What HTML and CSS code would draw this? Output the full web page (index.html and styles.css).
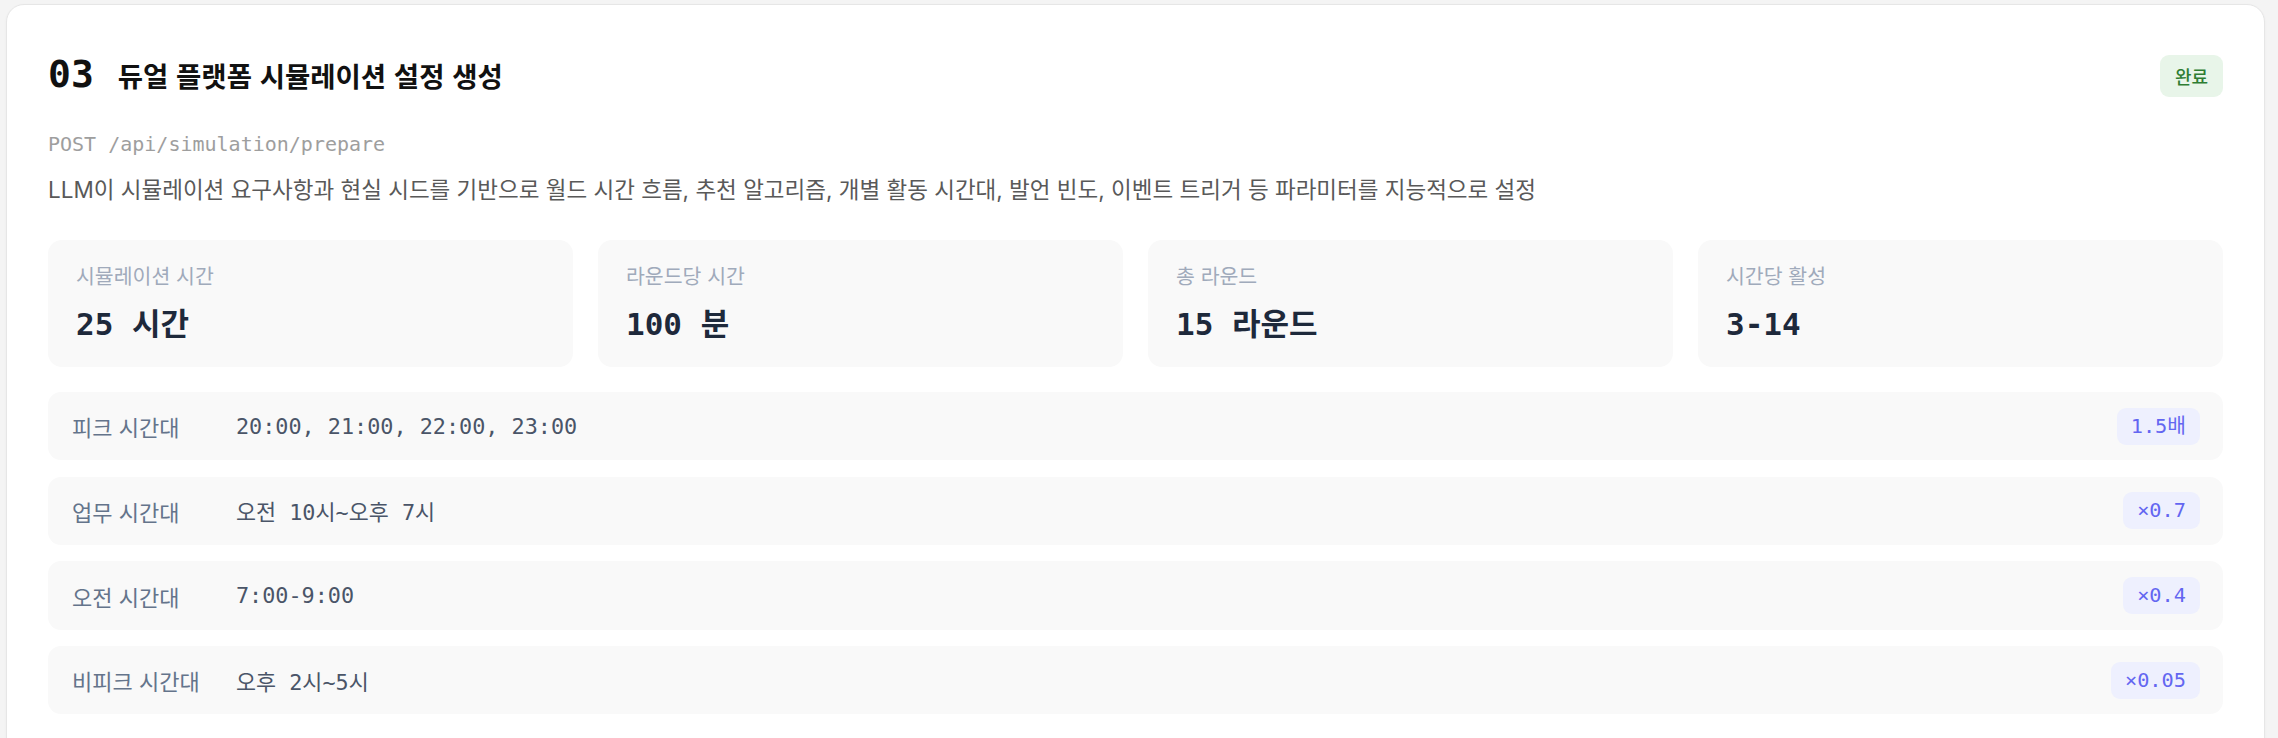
FILE: index.html
```html
<!DOCTYPE html>
<html lang="ko">
<head>
<meta charset="utf-8">
<title>03 듀얼 플랫폼 시뮬레이션 설정 생성</title>
<link rel="stylesheet" href="styles.css">
</head>
<body>
<div class="card">
  <div class="header">
    <div class="title-group">
      <span class="step">03</span>
      <h2 class="title">듀얼 플랫폼 시뮬레이션 설정 생성</h2>
    </div>
    <span class="status">완료</span>
  </div>
  <div class="endpoint">POST /api/simulation/prepare</div>
  <p class="desc">LLM이 시뮬레이션 요구사항과 현실 시드를 기반으로 월드 시간 흐름, 추천 알고리즘, 개별 활동 시간대, 발언 빈도, 이벤트 트리거 등 파라미터를 지능적으로 설정</p>

  <div class="stats">
    <div class="stat">
      <div class="stat-label">시뮬레이션 시간</div>
      <div class="stat-value">25 시간</div>
    </div>
    <div class="stat">
      <div class="stat-label">라운드당 시간</div>
      <div class="stat-value">100 분</div>
    </div>
    <div class="stat">
      <div class="stat-label">총 라운드</div>
      <div class="stat-value">15 라운드</div>
    </div>
    <div class="stat">
      <div class="stat-label">시간당 활성</div>
      <div class="stat-value">3-14</div>
    </div>
  </div>

  <div class="periods">
    <div class="period">
      <span class="period-label">피크 시간대</span>
      <span class="period-value">20:00, 21:00, 22:00, 23:00</span>
      <span class="mult">1.5배</span>
    </div>
    <div class="period">
      <span class="period-label">업무 시간대</span>
      <span class="period-value">오전 10시~오후 7시</span>
      <span class="mult">×0.7</span>
    </div>
    <div class="period">
      <span class="period-label">오전 시간대</span>
      <span class="period-value">7:00-9:00</span>
      <span class="mult">×0.4</span>
    </div>
    <div class="period">
      <span class="period-label">비피크 시간대</span>
      <span class="period-value">오후 2시~5시</span>
      <span class="mult">×0.05</span>
    </div>
  </div>
</div>
</body>
</html>
```

FILE: styles.css
```css
html, body {
  margin: 0;
  padding: 0;
  background: #f4f4f4;
}

body {
  font-family: "Inter", "Noto Sans CJK KR", sans-serif;
  overflow: hidden;
}

.card {
  margin: 4px 13px 0 6px;
  background: #ffffff;
  border: 1px solid #e6e6e6;
  border-radius: 18px;
  padding: 41px 41px 60px 41px;
  box-shadow: 0 1px 3px rgba(0, 0, 0, 0.04);
}

.header {
  display: flex;
  justify-content: space-between;
  align-items: flex-start;
  margin-bottom: 27px;
}

.title-group {
  display: flex;
  align-items: baseline;
  gap: 24px;
  line-height: 56px;
}

.step {
  font-family: "DejaVu Sans Mono", monospace;
  font-weight: 700;
  font-size: 38px;
  color: #111111;
}

.title {
  margin: 0;
  font-family: "Noto Sans CJK KR", sans-serif;
  font-size: 27.5px;
  font-weight: 700;
  color: #111111;
}

.status {
  margin-top: 9px;
  padding: 9px 15px;
  line-height: 24px;
  font-family: "Noto Sans CJK KR", sans-serif;
  font-size: 18px;
  font-weight: 500;
  color: #2e7d32;
  background: #e8f5e9;
  border-radius: 9px;
}

.endpoint {
  font-family: "DejaVu Sans Mono", monospace;
  font-size: 20px;
  line-height: 28px;
  color: #9e9e9e;
}

.desc {
  margin: 16px 0 0 0;
  font-size: 22.5px;
  line-height: 32px;
  color: #595959;
}

.stats {
  display: grid;
  grid-template-columns: repeat(4, 1fr);
  gap: 25px;
  margin-top: 34px;
}

.stat {
  background: #f9f9f9;
  border-radius: 14px;
  padding: 23px 28px 24px 28px;
}

.stat-label {
  font-size: 20.5px;
  line-height: 27px;
  color: #a0aabb;
}

.stat-value {
  margin-top: 15px;
  font-family: "DejaVu Sans Mono", "Noto Sans CJK KR", monospace;
  font-size: 31px;
  line-height: 38px;
  font-weight: 700;
  color: #1e293b;
}

.periods {
  display: flex;
  flex-direction: column;
  gap: 16.3px;
  margin-top: 25px;
}

.period {
  display: flex;
  align-items: center;
  background: #f9f9f9;
  border-radius: 13px;
  padding: 15.7px 23px 15.7px 24px;
}

.period-label {
  width: 145px;
  margin-right: 19px;
  flex-shrink: 0;
  font-size: 22px;
  color: #64748b;
  white-space: nowrap;
}

.period-value {
  flex: 1;
  font-family: "DejaVu Sans Mono", "Noto Sans CJK KR", monospace;
  font-size: 21.8px;
  color: #4a5568;
}

.mult {
  padding: 5px 14px;
  line-height: 27px;
  font-family: "DejaVu Sans Mono", "Noto Sans CJK KR", monospace;
  font-size: 20.3px;
  color: #6366f1;
  background: #eef0fe;
  border-radius: 9px;
}
```
